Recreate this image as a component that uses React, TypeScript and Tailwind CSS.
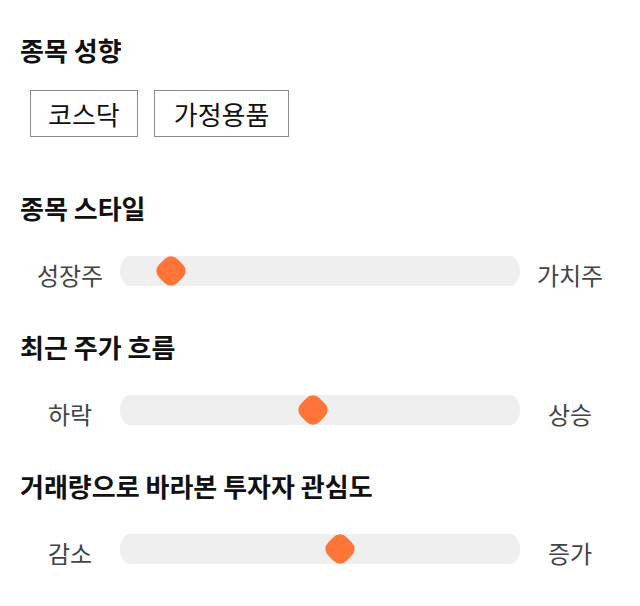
import React from "react";

const font = { fontFamily: '"Noto Sans CJK KR", "Noto Sans", sans-serif' };

type Row = { title: string; left: string; right: string; pos: number };

const rows: Row[] = [
  { title: "종목 스타일", left: "성장주", right: "가치주", pos: 36 },
  { title: "최근 주가 흐름", left: "하락", right: "상승", pos: 178 },
  { title: "거래량으로 바라본 투자자 관심도", left: "감소", right: "증가", pos: 205 },
];

function Heading({ children }: { children: React.ReactNode }) {
  return (
    <h2 className="h-[32px] leading-[32px] text-[26px] font-bold text-[#111] whitespace-nowrap">
      {children}
    </h2>
  );
}

function Slider({ row }: { row: Row }) {
  return (
    <div className="flex items-center h-[30px] mt-[32px]">
      <div className="w-[100px] text-center text-[24px] text-[#444] leading-[30px] translate-y-[4px]">{row.left}</div>
      <div className="relative flex-1 h-[30px] bg-[#efefef] rounded-[10px/15px]">
        <div
          className="absolute top-[0px] w-[30px] h-[30px] flex items-center justify-center"
          style={{ left: row.pos }}
        >
          <div className="w-[26px] h-[26px] rotate-45 rounded-[9px] bg-[#ff7438]" />
        </div>
      </div>
      <div className="w-[100px] text-center text-[24px] text-[#444] leading-[30px] translate-y-[4px]">{row.right}</div>
    </div>
  );
}

export default function App() {
  return (
    <div className="w-[640px] h-[606px] bg-white px-5 pt-[34px]" style={font}>
      <Heading>종목 성향</Heading>
      <div className="flex gap-4 ml-[10px] mt-[24px]">
        <div className="h-[47px] px-[17px] border border-[#8a8a8a] flex items-center text-[26px] text-[#111]">코스닥</div>
        <div className="h-[47px] px-[19px] border border-[#8a8a8a] flex items-center text-[26px] text-[#111]">가정용품</div>
      </div>
      {rows.map((r, i) => (
        <div key={r.title} className={i === 0 ? "mt-[55px]" : "mt-[45px]"}>
          <Heading>{r.title}</Heading>
          <Slider row={r} />
        </div>
      ))}
    </div>
  );
}
